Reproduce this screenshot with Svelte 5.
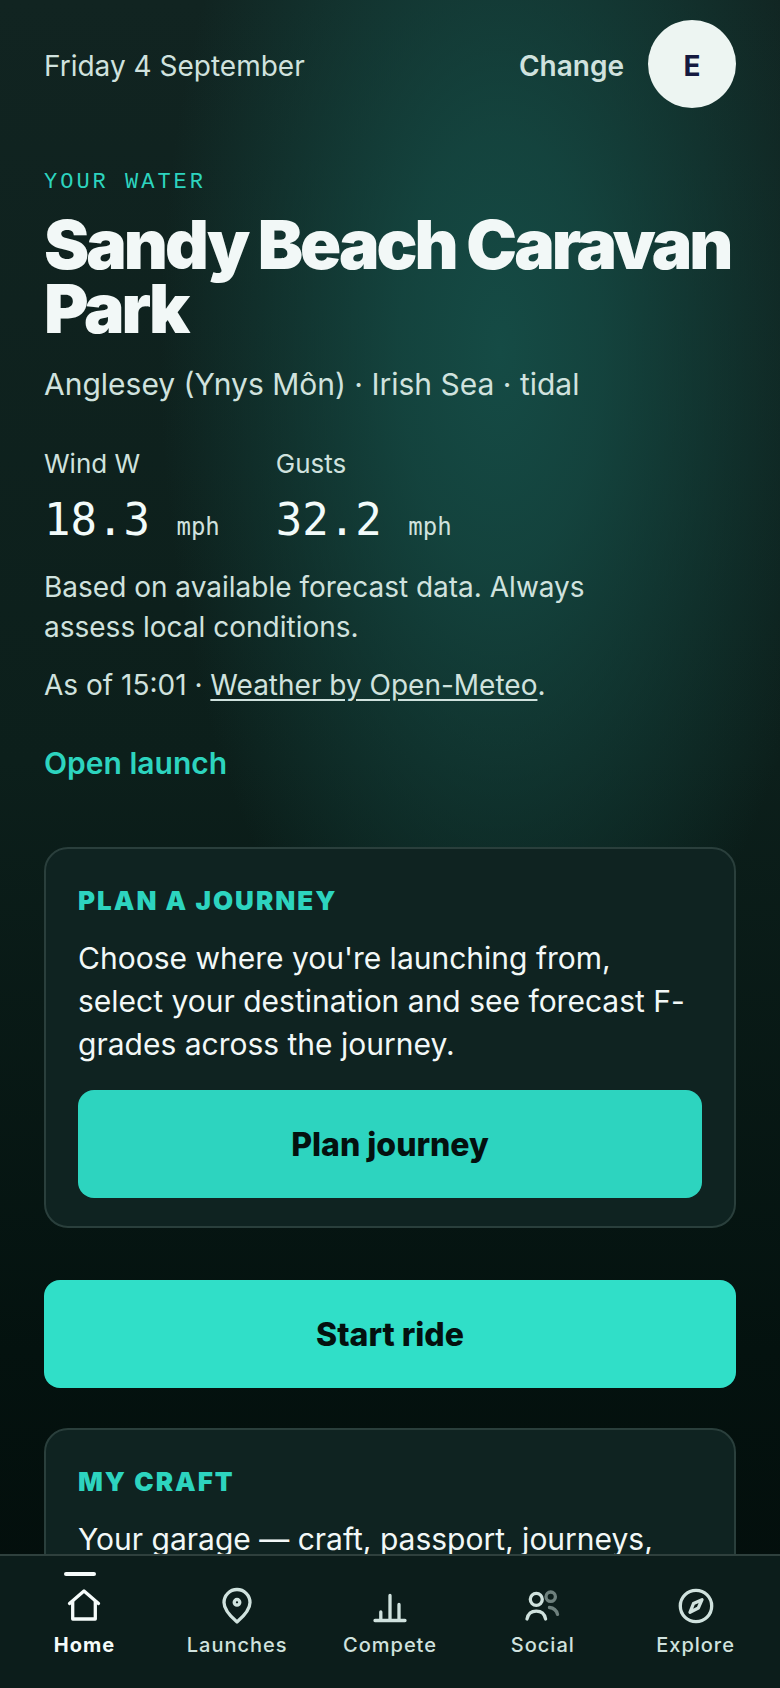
<script lang="ts">
  const readings = [
    { label: "Wind W", value: "18.3", unit: "mph" },
    { label: "Gusts", value: "32.2", unit: "mph" },
  ];

  const tabs = ["Home", "Launches", "Compete", "Social", "Explore"];
  let active = "Home";
</script>

<div class="screen">
  <main>
    <header>
      <span class="date">Friday 4 September</span>
      <button class="change">Change</button>
      <button class="avatar" aria-label="Account">E</button>
    </header>

    <section class="water">
      <p class="eyebrow">YOUR WATER</p>
      <h1>Sandy Beach Caravan Park</h1>
      <p class="place">Anglesey (Ynys Môn) · Irish Sea · tidal</p>
      <dl>
        {#each readings as r}
          <div>
            <dt>{r.label}</dt>
            <dd>{r.value} <small>{r.unit}</small></dd>
          </div>
        {/each}
      </dl>
      <p class="note">
        Based on available forecast data. Always assess local conditions.
      </p>
      <p class="note">
        As of 15:01 · <a href="#weather">Weather by Open-Meteo</a>.
      </p>
      <a class="open" href="#launch">Open launch</a>
    </section>

    <section class="card">
      <h2>PLAN A JOURNEY</h2>
      <p>
        Choose where you're launching from, select your destination and see
        forecast F-grades across the journey.
      </p>
      <button class="primary">Plan journey</button>
    </section>

    <button class="primary start">Start ride</button>

    <section class="card">
      <h2>MY CRAFT</h2>
      <p>Your garage — craft, passport, journeys,</p>
    </section>
  </main>

  <nav>
    {#each tabs as tab}
      <a
        href="#{tab.toLowerCase()}"
        class:active={tab === active}
        on:click={() => (active = tab)}
      >
        <svg viewBox="0 0 40 40" aria-hidden="true">
          {#if tab === "Home"}
            <path d="M5.5 17.5 20 5l14.500 12.500" />
            <path d="M8.700 15.500V33h22.600V15.500" />
          {:else if tab === "Launches"}
            <path
              d="M20 36C16 32.500 7 25 7 16.500a13 13 0 0 1 26 0C33 25 24 32.500 20 36Z"
            />
            <circle cx="20" cy="16.300" r="2.800" />
          {:else if tab === "Compete"}
            <path d="M5 34.500h30M10.800 34V26M20 34V9.500M29 34V18.500" />
          {:else if tab === "Social"}
            <circle cx="13.300" cy="13.300" r="6" />
            <path d="M4 33c1-5 4.500-7.800 9.300-7.800s8.300 2.800 9.300 7.800" />
            <g opacity="0.5">
              <circle cx="27.700" cy="10.700" r="4.700" />
              <path d="M26.500 21.500c4.500.5 7 3 8 6.800" />
            </g>
          {:else}
            <circle cx="20" cy="20" r="15.700" />
            <path d="M26 13.700 22.300 22 14 26.300 17.500 17.500Z" />
          {/if}
        </svg>
        <span>{tab}</span>
      </a>
    {/each}
  </nav>
</div>

<style>
  :global(body) {
    background: #04100e;
  }

  .screen {
    height: 100vh;
    display: flex;
    flex-direction: column;
    font-family: Inter, "Liberation Sans", sans-serif;
    color: #f2f8f7;
    background:
      radial-gradient(
        ellipse 340px 720px at 500px 350px,
        #154b45 0%,
        #154b45cc 30%,
        #154b4566 65%,
        #154b4500 100%
      ),
      linear-gradient(#112421 0%, #0c1f1b 45%, #04120f 80%, #030d0b 100%);
  }

  main {
    flex: 1;
    min-height: 0;
    overflow-y: auto;
    scrollbar-width: none;
    padding: 20px 44px;
    display: flex;
    flex-direction: column;
  }

  p,
  h1,
  h2,
  dl,
  dd {
    margin: 0;
  }

  button {
    font-family: inherit;
    border: 0;
    padding: 0;
    cursor: pointer;
  }

  header {
    display: flex;
    align-items: center;
    gap: 24px;
    font-size: 28px;
    color: #d0e2de;
  }

  .date {
    flex: 1;
    padding-top: 4px;
  }

  .change {
    padding-top: 4px;
    background: none;
    color: inherit;
    font-size: 28px;
    font-weight: 600;
  }

  .avatar {
    width: 88px;
    height: 88px;
    padding-top: 4px;
    border-radius: 50%;
    background: #edf5f2;
    color: #14193f;
    font-size: 28px;
    font-weight: 700;
  }

  .water {
    display: flex;
    flex-direction: column;
    align-items: flex-start;
    padding-top: 60px;
  }

  .eyebrow {
    font-family: "Liberation Mono", monospace;
    font-size: 22px;
    line-height: 30px;
    letter-spacing: 3px;
    color: #2dd4bf;
  }

  h1 {
    margin-top: 14px;
    font-size: 68px;
    line-height: 64px;
    font-weight: 900;
    letter-spacing: -3px;
  }

  .place {
    margin-top: 22px;
    font-size: 30px;
    line-height: 44px;
    color: #d0e2de;
  }

  dl {
    display: flex;
    gap: 56px;
    margin-top: 40px;
  }

  dt {
    font-size: 26px;
    line-height: 36px;
    color: #d0e2de;
  }

  dd {
    margin-top: 16px;
    font-family: "DejaVu Sans Mono", monospace;
    font-size: 44px;
    line-height: 44px;
    color: #f2fbfa;
  }

  small {
    font-size: 24px;
    color: #d0e2de;
  }

  .note {
    max-width: 580px;
    margin-top: 18px;
    font-size: 28px;
    line-height: 40px;
    color: #d0e2de;
  }

  .note a {
    color: inherit;
    text-underline-offset: 4px;
  }

  .open {
    margin-top: 34px;
    font-size: 30px;
    line-height: 48px;
    font-weight: 600;
    color: #2dd4bf;
    text-decoration: none;
  }

  .card {
    margin-top: 60px;
    padding: 34px 32px 28px;
    border: 2px solid #2a3f3c;
    border-radius: 24px;
    background: #0f2321;
  }

  .card h2 {
    font-size: 26px;
    line-height: 36px;
    font-weight: 900;
    letter-spacing: 2px;
    color: #2dd4bf;
  }

  .card p {
    margin: 18px 0 24px;
    font-size: 30px;
    line-height: 43px;
  }

  .primary {
    width: 100%;
    height: 108px;
    flex-shrink: 0;
    border-radius: 16px;
    background: #2dd4bf;
    color: #04110f;
    font-size: 32px;
    font-weight: 800;
  }

  .start {
    margin-top: 52px;
    background: #30dfc8;
  }

  .start + .card {
    margin-top: 40px;
  }

  nav {
    display: flex;
    border-top: 2px solid #2f403d;
    padding: 0 8px 28px;
    background: #0c1d1b;
  }

  nav a {
    position: relative;
    flex: 1;
    display: flex;
    flex-direction: column;
    align-items: center;
    gap: 4px;
    padding-top: 30px;
    font-size: 20px;
    line-height: 30px;
    font-weight: 500;
    letter-spacing: 1px;
    color: #d0e2de;
    text-decoration: none;
  }

  nav a.active {
    color: #f5fbfa;
    font-weight: 700;
  }

  nav a.active::before {
    content: "";
    position: absolute;
    top: 16px;
    left: 56px;
    width: 32px;
    height: 4px;
    border-radius: 2px;
    background: #f5fbfa;
  }

  svg {
    width: 40px;
    height: 40px;
    fill: none;
    stroke: currentColor;
    stroke-width: 3.3;
    stroke-linecap: round;
    stroke-linejoin: round;
  }
</style>
